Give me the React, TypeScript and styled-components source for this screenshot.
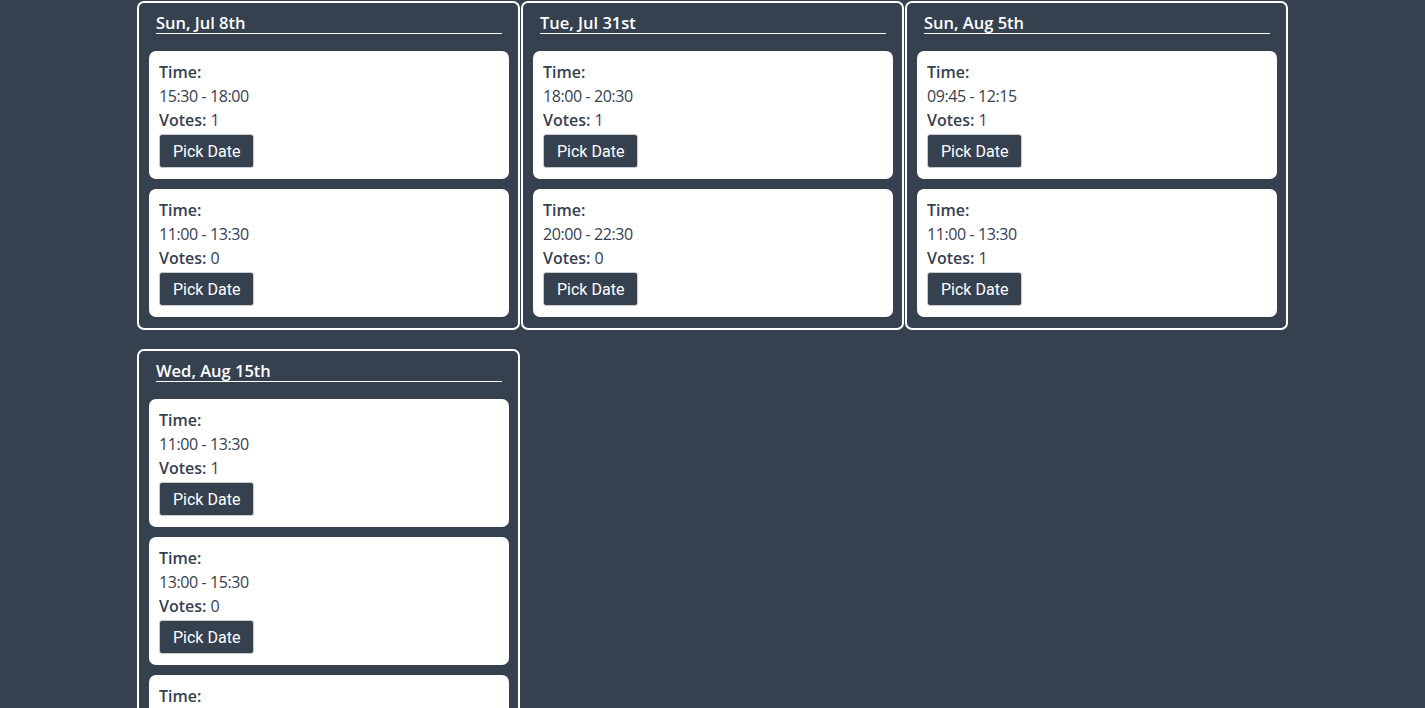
import styled, { createGlobalStyle } from 'styled-components';

const GlobalStyle = createGlobalStyle`
  body {
    margin: 0;
    background: #36414f;
    font-family: 'Open Sans', 'Liberation Sans', sans-serif;
  }
`;

const StyledPage = styled.div`
  display: grid;
  grid-template-columns: repeat(3, 383px);
  column-gap: 1px;
  row-gap: 19px;
  justify-content: center;
  align-items: start;
  padding-top: 1px;
`;

const StyledDay = styled.section`
  border: 2px solid #ffffff;
  border-radius: 7px;
  padding: 1px 9px 11px 10px;
`;

const StyledHeading = styled.h2`
  margin: 9px 7px 17px;
  padding: 0;
  font-size: 16.5px;
  font-weight: 600;
  line-height: 20px;
  color: #ffffff;
  border-bottom: 1px solid #ffffff;
`;

const StyledSlots = styled.div`
  display: flex;
  flex-direction: column;
  gap: 10px;
`;

const StyledSlot = styled.div`
  background: #ffffff;
  border-radius: 7px;
  padding: 9px 10px 11px;
  color: #36414f;
  font-size: 16px;
  line-height: 24px;
`;

const StyledLine = styled.div`
  white-space: nowrap;
`;

const StyledTime = styled(StyledLine)`
  letter-spacing: -0.4px;
`;

const StyledLabel = styled.span`
  font-weight: 600;
`;

const StyledButton = styled.button`
  display: block;
  height: 34px;
  margin-top: 2px;
  padding: 0 13px;
  background: #36414f;
  color: #ffffff;
  border: 1px solid #c9ccd1;
  border-radius: 3px;
  font-family: Roboto, 'Liberation Sans', sans-serif;
  font-size: 16px;
  cursor: pointer;
`;

type Slot = { time: string; votes: number };
type Day = { label: string; slots: Slot[] };

const days: Day[] = [
  {
    label: 'Sun, Jul 8th',
    slots: [
      { time: '15:30 - 18:00', votes: 1 },
      { time: '11:00 - 13:30', votes: 0 },
    ],
  },
  {
    label: 'Tue, Jul 31st',
    slots: [
      { time: '18:00 - 20:30', votes: 1 },
      { time: '20:00 - 22:30', votes: 0 },
    ],
  },
  {
    label: 'Sun, Aug 5th',
    slots: [
      { time: '09:45 - 12:15', votes: 1 },
      { time: '11:00 - 13:30', votes: 1 },
    ],
  },
  {
    label: 'Wed, Aug 15th',
    slots: [
      { time: '11:00 - 13:30', votes: 1 },
      { time: '13:00 - 15:30', votes: 0 },
      { time: '16:00 - 18:30', votes: 0 },
    ],
  },
];

function DayCard({ day }: { day: Day }) {
  return (
    <StyledDay>
      <StyledHeading>{day.label}</StyledHeading>
      <StyledSlots>
        {day.slots.map((slot, i) => (
          <StyledSlot key={i}>
            <StyledLine>
              <StyledLabel>Time:</StyledLabel>
            </StyledLine>
            <StyledTime>{slot.time}</StyledTime>
            <StyledLine>
              <StyledLabel>Votes:</StyledLabel> {slot.votes}
            </StyledLine>
            <StyledButton>Pick Date</StyledButton>
          </StyledSlot>
        ))}
      </StyledSlots>
    </StyledDay>
  );
}

export default function App() {
  return (
    <>
      <GlobalStyle />
      <StyledPage>
        {days.map((day) => (
          <DayCard key={day.label} day={day} />
        ))}
      </StyledPage>
    </>
  );
}
